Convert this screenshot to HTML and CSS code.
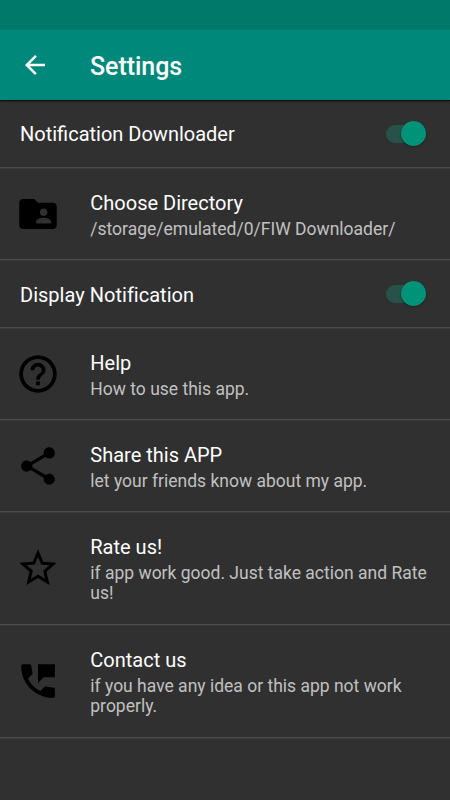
FILE: index.html
```
<!DOCTYPE html>
<html lang="en">
<head>
<meta charset="utf-8">
<title>Settings</title>
<link rel="stylesheet" href="styles.css">
</head>
<body>
<div class="status"></div>
<header class="bar">
<svg class="back" viewBox="0 0 24 24"><path d="M20 11H7.83l5.59-5.59L12 4l-8 8 8 8 1.41-1.41L7.83 13H20z"/></svg>
<h1>Settings</h1>
</header>
<main>
<div class="row toggle"><span class="title">Notification Downloader</span><span class="switch"></span></div>
<div class="row item">
<svg class="icon" viewBox="0 0 24 24"><path d="M20 6h-8l-2-2H4c-1.100 0-1.990.9-1.990 2L2 18c0 1.100.9 2 2 2h16c1.100 0 2-.9 2-2V8c0-1.100-.9-2-2-2zm-5 3c1.100 0 2 .9 2 2s-.9 2-2 2-2-.9-2-2 .9-2 2-2zm4 8h-8v-1c0-1.330 2.670-2 4-2s4 .67 4 2z"/></svg>
<div class="text"><div class="title">Choose Directory</div><div class="sub">/storage/emulated/0/FIW Downloader/</div></div>
</div>
<div class="row toggle second"><span class="title">Display Notification</span><span class="switch"></span></div>
<div class="row item">
<svg class="icon" viewBox="0 0 24 24"><path d="M11 18h2v-2h-2zm1-16C6.480 2 2 6.480 2 12s4.480 10 10 10 10-4.480 10-10S17.520 2 12 2zm0 18c-4.410 0-8-3.590-8-8s3.590-8 8-8 8 3.590 8 8-3.590 8-8 8zm0-14c-2.210 0-4 1.790-4 4h2c0-1.100.9-2 2-2s2 .9 2 2c0 2-3 1.750-3 5h2c0-2.250 3-2.500 3-5 0-2.210-1.790-4-4-4z"/></svg>
<div class="text"><div class="title">Help</div><div class="sub">How to use this app.</div></div>
</div>
<div class="row item">
<svg class="icon" viewBox="0 0 24 24"><path d="M18 16.080c-.76 0-1.440.3-1.960.77L8.910 12.700c.05-.23.090-.46.090-.7s-.04-.47-.09-.7l7.050-4.110c.54.5 1.250.81 2.040.81 1.660 0 3-1.340 3-3s-1.340-3-3-3-3 1.340-3 3c0 .24.040.47.090.7L8.040 9.810C7.500 9.310 6.790 9 6 9c-1.660 0-3 1.340-3 3s1.340 3 3 3c.79 0 1.500-.31 2.040-.81l7.120 4.160c-.05.21-.08.43-.08.65 0 1.610 1.310 2.920 2.920 2.920s2.920-1.310 2.920-2.920-1.310-2.920-2.920-2.920z"/></svg>
<div class="text"><div class="title">Share this APP</div><div class="sub">let your friends know about my app.</div></div>
</div>
<div class="row item tall">
<svg class="icon" viewBox="0 0 24 24"><path d="M22 9.240l-7.190-.62L12 2 9.190 8.630 2 9.240l5.460 4.730L5.820 21 12 17.270 18.180 21l-1.630-7.030zM12 15.400l-3.760 2.270 1-4.280-3.320-2.880 4.380-.38L12 6.100l1.710 4.040 4.380.38-3.320 2.880 1 4.280z"/></svg>
<div class="text"><div class="title">Rate us!</div><div class="sub">if app work good. Just take action and Rate<br>us!</div></div>
</div>
<div class="row item tall">
<svg class="icon" viewBox="0 0 24 24"><path d="M20 15.500c-1.250 0-2.450-.2-3.570-.57-.35-.11-.74-.03-1.020.24l-2.200 2.200c-2.830-1.440-5.150-3.750-6.590-6.590l2.200-2.210c.28-.26.36-.65.25-1C8.700 6.450 8.500 5.250 8.500 4c0-.55-.45-1-1-1H4c-.55 0-1 .45-1 1 0 9.390 7.610 17 17 17 .55 0 1-.45 1-1v-3.500c0-.55-.45-1-1-1zM12 3v10l3-3h6V3z"/></svg>
<div class="text"><div class="title">Contact us</div><div class="sub">if you have any idea or this app not work<br>properly.</div></div>
</div>
</main>
</body>
</html>
```
FILE: styles.css
```
* { box-sizing: border-box; }
body { margin: 0; height: 800px; overflow: hidden; background: #303030; font-family: Roboto, sans-serif; color: #fff; }
.status { height: 30px; background: #00796b; }
.bar { height: 70px; display: flex; align-items: center; padding-left: 20px; background: #00897b; box-shadow: 0 1px 0 #180808, 0 2px 2px #222; }
.back { width: 30px; height: 30px; fill: #fff; }
h1 { margin: 3px 0 0 40px; font-size: 25px; font-weight: 500; line-height: 30px; letter-spacing: -0.05px; }
.row { display: flex; border-bottom: 1px solid #4b4b4b; box-shadow: 0 1px 0 #3b3b3b; }
.toggle { height: 68px; align-items: center; justify-content: space-between; padding: 0 24px 0 20px; }
.second .title { padding-top: 2px; letter-spacing: 0.02px; }
.item { height: 92px; padding: 22px 20px 0 15px; }
.item.tall { height: 113px; }
.icon { width: 46px; height: 46px; padding: 0.5px; margin-top: 1px; flex: none; fill: #000; }
.tall .icon { margin-top: 11px; }
.text { margin-left: 29.3px; white-space: nowrap; }
.title { font-size: 20px; line-height: 26px; }
.sub { font-size: 17.5px; line-height: 20px; margin-top: 3px; color: #c1c1c1; }
.switch { width: 40px; height: 18px; border-radius: 9px; background: #27524a; position: relative; }
.switch::after { content: ""; position: absolute; right: 0; top: -4px; width: 25px; height: 25px; border-radius: 50%; background: #009378; box-shadow: 0 1px 2px #222; }
```
